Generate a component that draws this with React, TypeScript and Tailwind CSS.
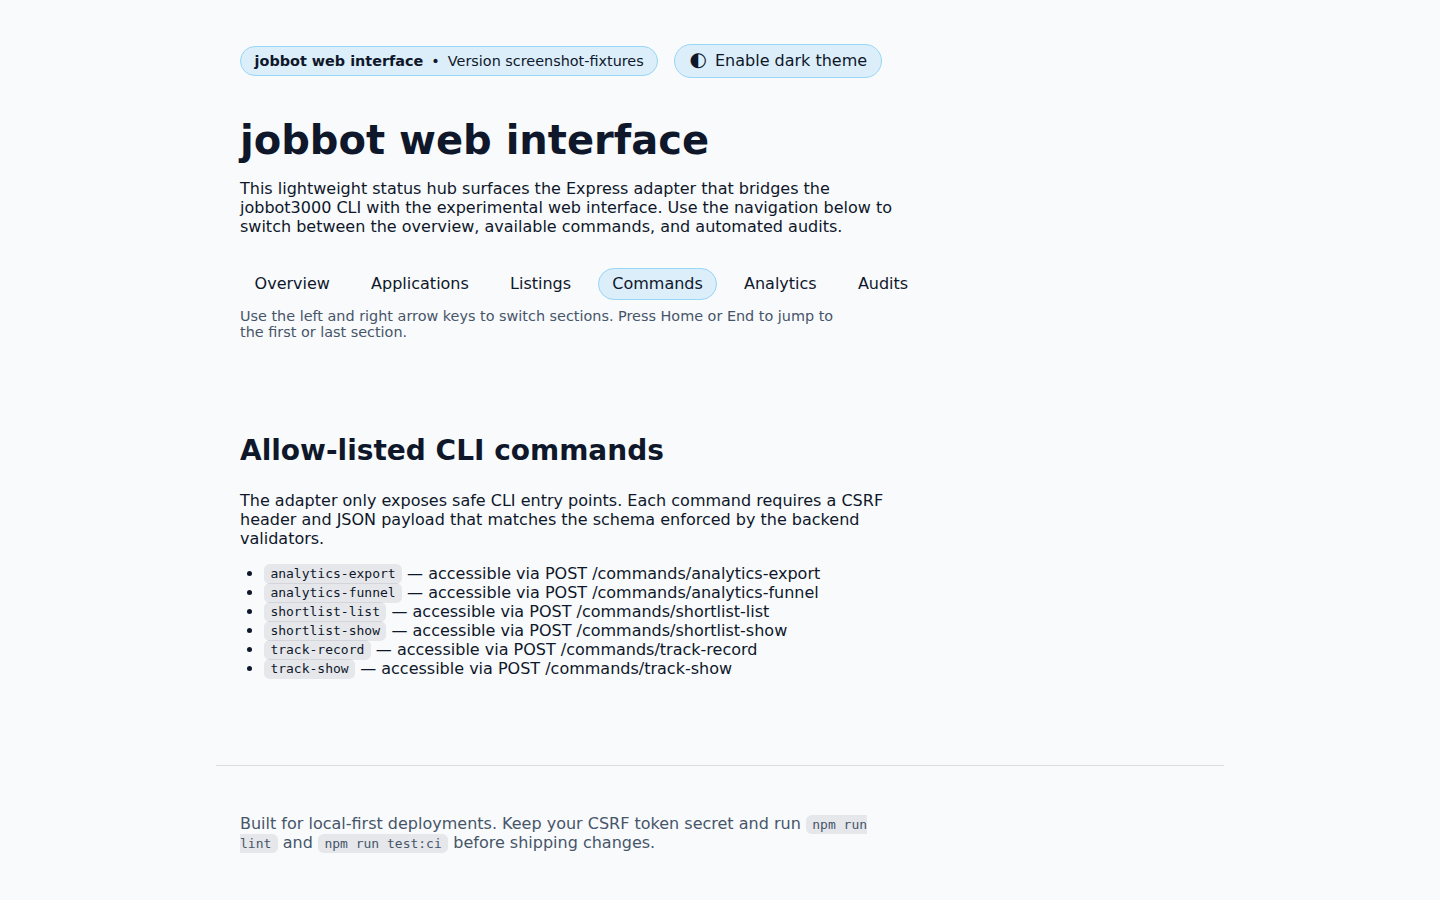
import React from "react";

const commands = ["analytics-export", "analytics-funnel", "shortlist-list", "shortlist-show", "track-record", "track-show"];
const sections = ["Overview", "Applications", "Listings", "Commands", "Analytics", "Audits"];

function Code({ children }: { children: React.ReactNode }) {
  return (
    <code className="rounded-[5.6px] bg-[rgba(15,15,32,0.08)] px-[6.4px] py-[2.4px] font-['DejaVu_Sans_Mono',monospace] text-[13px] leading-none">
      {children}
    </code>
  );
}

export default function App() {
  return (
    <div className="min-h-screen bg-[#f8fafc] font-['DejaVu_Sans',sans-serif] text-[16px] leading-[normal] text-[#0f172a]">
      <header className="mx-auto w-[1008px] px-6 pt-11">
        <div className="flex h-[34px] items-center gap-4">
          <div className="flex h-[30px] items-center gap-2 rounded-full border border-[#98d7f5] bg-[#dbeefa] px-[13.6px] text-[14.4px] whitespace-nowrap">
            <strong className="font-bold">jobbot web interface</strong>
            <span>•</span>
            <span>Version screenshot-fixtures</span>
          </div>
          <button className="flex h-[34px] items-center gap-2 rounded-full border border-[#98d7f5] bg-[#dbeefa] pr-[13.9px] pl-[14.2px] pb-px whitespace-nowrap">
            <span className="pb-[4px] text-[20px] leading-none">◐</span>
            <span>Enable dark theme</span>
          </button>
        </div>
        <h1 className="mt-[39px] text-[40px] leading-[47px] font-bold">jobbot web interface</h1>
        <p className="mt-[15px] w-[672px]">
          This lightweight status hub surfaces the Express adapter that bridges the jobbot3000 CLI with the experimental web interface. Use the navigation below to switch between the overview, available commands, and automated audits.
        </p>
        <nav className="mt-8 flex h-8 gap-3">
          {sections.map((name) => (
            <a
              key={name}
              className={
                name === "Commands"
                  ? "rounded-full border border-[#98d7f5] bg-[#dbeefa] px-[13.6px] pt-[5px]"
                  : "rounded-full border border-transparent px-[13.6px] pt-[5px]"
              }
            >
              {name}
            </a>
          ))}
        </nav>
        <p className="mt-2 w-[608px] text-[14.4px] leading-4 text-[#475569]">
          Use the left and right arrow keys to switch sections. Press Home or End to jump to the first or last section.
        </p>
      </header>
      <main className="mx-auto w-[1008px] px-6 pt-[94px]">
        <h2 className="text-[28px] leading-[33px] font-bold">Allow-listed CLI commands</h2>
        <p className="mt-6 w-[672px]">
          The adapter only exposes safe CLI entry points. Each command requires a CSRF header and JSON payload that matches the schema enforced by the backend validators.
        </p>
        <ul className="mt-[15.6px] list-disc pl-6">
          {commands.map((name) => (
            <li key={name}>
              <Code>{name}</Code> — accessible via POST /commands/{name}
            </li>
          ))}
        </ul>
      </main>
      <footer className="mx-auto mt-[87.4px] w-[1008px] border-t border-[#d9dde3] px-6 pt-12 text-[#475569]">
        <p className="w-[672px]">
          Built for local-first deployments. Keep your CSRF token secret and run <Code>npm run lint</Code> and{" "}
          <Code>npm run test:ci</Code> before shipping changes.
        </p>
      </footer>
    </div>
  );
}
